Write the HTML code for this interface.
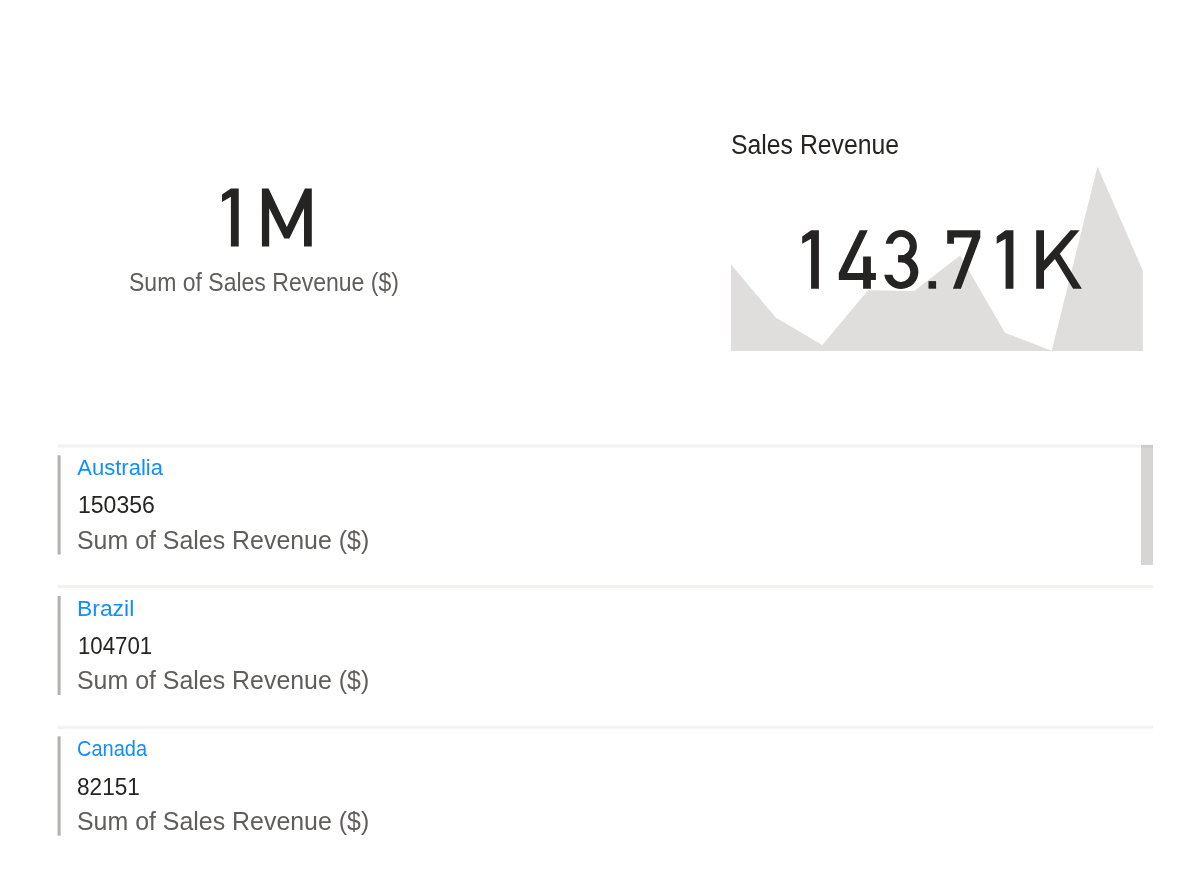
<!DOCTYPE html>
<html><head><meta charset="utf-8">
<style>
html,body{margin:0;padding:0;background:#fff;width:1186px;height:893px;overflow:hidden;}
body{position:relative;font-family:"Liberation Sans",sans-serif;}
.t{position:absolute;white-space:nowrap;line-height:1;transform-origin:0 0;}
.cat{color:#118dff;font-size:22px;}
.val{color:#252423;font-size:24.7px;}
.lab{color:#605e5c;font-size:25.5px;transform:scaleX(0.977);}
svg{position:absolute;left:0;top:0;}
</style></head><body>
<svg width="1186" height="893">
<polygon fill="#dfdedd" points="731,351 731,264.5 776,317.8 822.3,345 868,290.2 914.2,291 960,255.5 1005,332.8 1051.7,350.8 1097.5,166.6 1142.8,270.6 1142.8,351"/>
<g fill="#252423">
<path d="M818.90,230.30 L818.90,288.70 L811.07,288.70 L811.07,238.70 L802.20,243.80 L802.20,236.40 L811.07,230.30 Z"/>
<path d="M859.7,230.3 L867.8,230.3 L847.2,273 L863.1,273 L863.1,256.4 L870.9,256.4 L870.9,273 L875.9,273 L875.9,279.9 L870.9,279.9 L870.9,288.7 L863.1,288.7 L863.1,279.9 L838.8,279.9 L838.8,273 Z"/>
<path d="M885.7,243.8 A15.7,16.1 0 0 1 901.2,230.1 A15.7,16.1 0 0 1 916.9,246.2 A15.7,16.1 0 0 1 901.2,262.3 L898.2,262.3 L898.2,255.2 L901.2,255.2 A8.6,9.2 0 0 0 909.8,246 A8.6,9.2 0 0 0 901.2,236.8 A8.6,9.2 0 0 0 892.85,243.8 Z"/>
<path d="M901.2,255.2 A17.2,16.85 0 0 1 918.4,272.05 A17.2,16.85 0 0 1 901.2,288.9 A17.2,16.85 0 0 1 884.2,274.8 L892.35,274.8 A9.2,9.8 0 0 0 901.2,281.9 A9.2,9.8 0 0 0 910.4,272.1 A9.2,9.8 0 0 0 901.2,262.3 L898.2,262.3 L898.2,255.2 Z"/>
<path d="M928.5,281.1 L936.1,281.1 L936.1,288.7 L928.5,288.7 Z"/>
<path d="M947.2,230.3 L980.3,230.3 L980.3,237.5 L960.9,288.7 L952.9,288.7 L972,237.5 L954,237.5 L954,243.8 L947.2,243.8 Z"/>
<path d="M1013.43,230.30 L1013.43,288.70 L1005.60,288.70 L1005.60,238.70 L996.73,243.80 L996.73,236.40 L1005.60,230.30 Z"/>
<path d="M1036.2,230.3 L1044,230.3 L1044,260.4 L1070.5,230.3 L1079.5,230.3 L1059.8,253.7 L1081.9,288.7 L1073.1,288.7 L1054.9,259.1 L1044,271 L1044,288.7 L1036.2,288.7 Z"/>
<path d="M238.73,188.40 L238.73,246.60 L230.90,246.60 L230.90,196.80 L222.03,201.90 L222.03,194.50 L230.90,188.40 Z"/>
<path d="M261.9,188.4 L268.6,188.4 L286.85,226.9 L304.9,188.4 L311.8,188.4 L311.8,246.6 L304,246.6 L304,208.3 L289.4,238.4 L284.3,238.4 L269.2,208.3 L269.2,246.6 L261.9,246.6 Z"/>
</g>
<rect x="1141" y="445" width="12" height="120" fill="#d6d5d4"/>
<g fill="#f3f2f1" style="mix-blend-mode:multiply">
<rect x="57.5" y="444.5" width="1095.5" height="3"/>
<rect x="57.5" y="585" width="1095.5" height="3"/>
<rect x="57.5" y="725.8" width="1095.5" height="3"/>
</g>
<g fill="#b3b0ad">
<rect x="57.6" y="455.3" width="3" height="99.2"/>
<rect x="57.6" y="596" width="3" height="99"/>
<rect x="57.6" y="736.3" width="3" height="99.4"/>
</g>

</svg>
<div class="t" style="left:216.9px;top:174px;font-size:86px;color:transparent;transform:scaleX(0.849)">1M</div>
<div class="t" style="left:796.2px;top:216px;font-size:86px;color:transparent;transform:scaleX(0.895)">143.71K</div>
<div class="t" style="left:128.9px;top:270px;font-size:25px;color:#605e5c;transform:scaleX(0.9206)">Sum of Sales Revenue ($)</div>
<div class="t" style="left:730.9px;top:131.5px;font-size:27px;color:#252423;transform:scaleX(0.918)">Sales Revenue</div>

<div class="t cat" style="left:77.3px;top:457px;">Australia</div>
<div class="t val" style="left:78.4px;top:493px;transform:scaleX(0.933)">150356</div>
<div class="t lab" style="left:76.6px;top:528px;">Sum of Sales Revenue ($)</div>

<div class="t cat" style="left:76.5px;top:598px;transform:scaleX(1.04)">Brazil</div>
<div class="t val" style="left:78.4px;top:634px;transform:scaleX(0.9)">104701</div>
<div class="t lab" style="left:76.6px;top:668px;">Sum of Sales Revenue ($)</div>

<div class="t cat" style="left:76.5px;top:738px;transform:scaleX(0.91)">Canada</div>
<div class="t val" style="left:77px;top:775px;transform:scaleX(0.916)">82151</div>
<div class="t lab" style="left:76.6px;top:809px;">Sum of Sales Revenue ($)</div>
</body></html>
